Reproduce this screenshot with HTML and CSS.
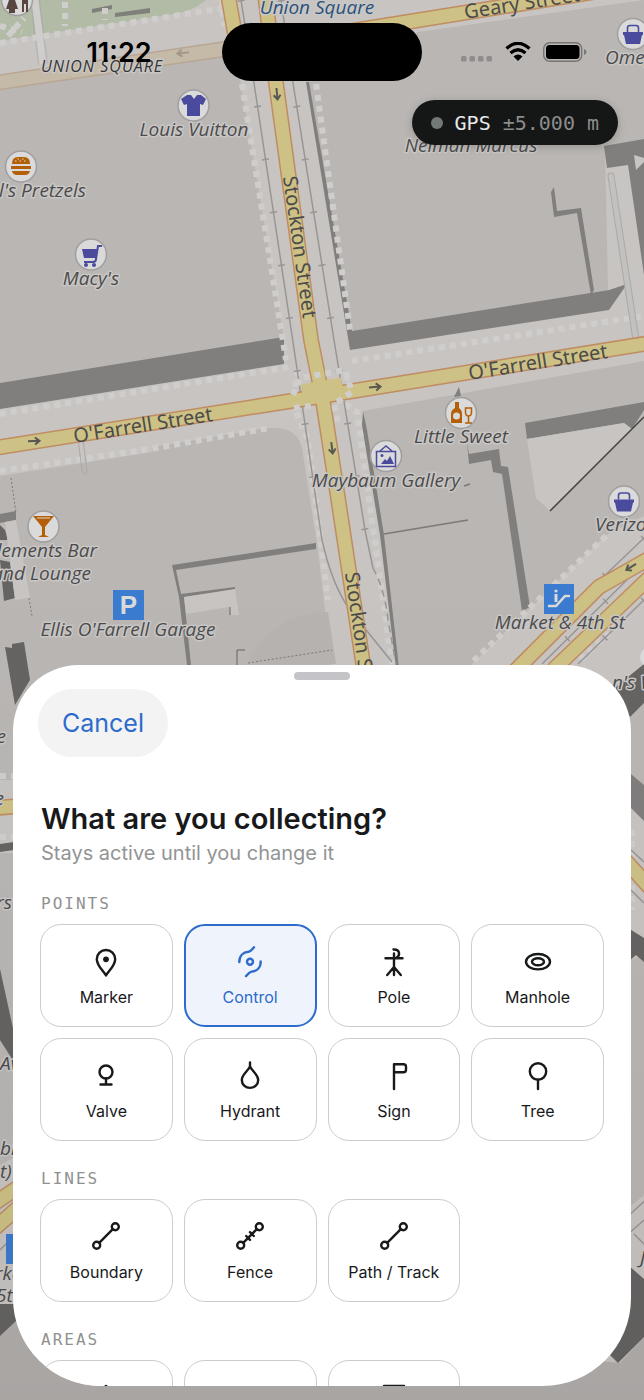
FILE: index.html
```html
<!DOCTYPE html>
<html lang="en">

<head>
  <meta charset="UTF-8">
  <meta name="viewport" content="width=device-width, initial-scale=1">
  <title>What are you collecting?</title>
  <link rel="stylesheet" href="styles.css">
</head>

<body>
  <div class="screen">

    <!-- map -->
    <svg class="map" viewBox="0 0 644 1400" preserveAspectRatio="xMidYMin slice" aria-hidden="true">
      <defs>
        <linearGradient id="fade" x1="0" y1="0" x2="0" y2="1">
          <stop offset="0" stop-color="#000" stop-opacity="0" />
          <stop offset="1" stop-color="#000" stop-opacity=".05" />
        </linearGradient>
        <g id="pin">
          <circle r="15.5" fill="#dadada" stroke="#a09e9e" stroke-width="1.5" />
        </g>
        <g id="bag">
          <path d="M-10 -2h20v3h-1l-2 9h-14l-2-9h-1z" fill="#4b4b9d" />
          <path d="M-5.500 -2v-4q0-2.500 2.500-2.500h6q2.500 0 2.500 2.500v4" fill="none" stroke="#4b4b9d" stroke-width="1.600" />
        </g>
        <path id="arrow" d="M-6 0h11M1-3.500L5.500 0 1 3.500" fill="none" stroke-width="2" />
      </defs>
      <rect width="644" height="1400" fill="#c8c4c2" />

      <!-- park -->
      <path d="M0 0h206q-15 13-38 15L0 41z" fill="#b1bba5" />
      <path d="M92 9l20-4v4l-20 4zM115 13l35-5v5l-35 4z" fill="#7f807b" />
      <path d="M35 0L43 64" stroke="#a5a3a3" stroke-width="10" fill="none" opacity=".5" />
      <path d="M35 0L43 64" stroke="#d0cecd" stroke-width="7" fill="none" />
      <path d="M65 2v24M105 8v12M0 26l22 6M8 36L24 18" class="dots" />
      <path d="M0 43L225 8" class="dots" />

      <!-- buildings -->
      <g fill="#bab6b3">
        <path d="M0 86L222 52L240 80L284 338L0 383z" />
        <path d="M306 48L644 0V140L605 147L608 290L352 331L307 80z" />
        <path d="M0 476L152 452V447L268 428Q297 426 302 448L318 550L332 670V780H0z" />
        <path d="M363 411L644 361V516L606 535L466 670H399z" />
        <path d="M0 853h40v290L0 1165zM600 720L631 716L644 703V785L631 774zM620 955l11 5 13-5V1195L620 1215z" />
        <path d="M0 1335L20 1306L620 1363L644 1337V1400H0z" fill="#b2aeac" />
      </g>
      <path d="M644 365L606 535L644 512z" fill="#bab6b3" />
      <path d="M247 664Q270 613 328 612L336 664z" fill="#b6b3b1" />

      <!-- shadows -->
      <g fill="#807f7d">
        <path d="M0 383L284 337V364L0 409z" />
        <path d="M306 82L309 82L352 331L609 290L627 284L609 310L350 350z" />
        <path d="M604 146L644 139V158L634 155L636 170L644 162V275L628 165L607 168z" />
        <path d="M551 192L554 187L557 211L581 208L594 290L591 295L577 213L554 217z" />
        <path d="M525 423L644 402V410L632 429L624 423L527 439z" />
        <path d="M467 443l2 11 30-5 2 17 7 1 22 140-8 4-20-137-9-2-2-12-22 4z" />
        <path d="M363 411L367 430L384 535L399 668H396L380 535L362 425z" />
        <path d="M172 565L316 543V549L176 570L181 594L235 587V590L184 597L191 665H187L179 597z" />
        <path d="M454 397L459 387L461 396z" />
        <path d="M0 514L16 511V520L0 523z" />
        <path d="M631 774L644 785V821L631 808z" />
      </g>
      <g fill="#656463">
        <path d="M0 525L5 530L8 540H0zM0 560L10 562L15 598L4 601z" />
        <path d="M5 647L12 648V644L24 642L30 680L15 705z" />
        <path d="M0 969L14 1033V1062L0 1040z" />
        <path d="M0 844L14 842V850L0 852z" />
        <path d="M0 1304H20L16 1321L0 1336z" />
        <path d="M644 664V703L630 717L612 690z" />
        <path d="M628 928L644 938V962L636 955L628 962z" />
        <path d="M628 1265L644 1279V1337L618 1363L605 1350z" />
      </g>
      <path d="M5 522L16 520L30 598L15 600z" fill="#c8c4c2" />
      <path d="M184 597L235 589L239 615H231L229 607L186 614z" fill="#c8c4c2" />
      <path d="M230 607v8M237 665V650h8" stroke="#656463" fill="none" />
      <path d="M527 439L624 423L632 429L550 511L536 498z" fill="#c8c4c2" />
      <path d="M644 417L550 511" stroke="#454443" stroke-width="1.500" />
      <path d="M384 534L468 520M464 486l6-2" stroke="#7b7977" stroke-width="1.500" />
      <path d="M248 663L332 650M11 478l5 35M29 598l3 18" stroke="#7b7977" stroke-dasharray="2 2" />

      <!-- footways -->
      <g class="dots">
        <path d="M242 84L286 360M316 84L350 330" />
        <path d="M0 414L290 367M352 361L644 316" />
        <path d="M0 471L150 449L270 428" />
        <path d="M298 370L292 402L308 440L328 600M348 375L340 400L357 412L392 664" />
        <path d="M606 536L470 664M625 618L580 660" />
        <path d="M222 0L224 26M632 830v80M0 776h14M0 837h14" />
      </g>
      <g fill="none">
        <path d="M78 439L82 470Q84 478 87 472L83 438" stroke="#aaa8a7" />
        <path d="M611 176L636 340" stroke="#a9a9a8" stroke-width="7" stroke-linecap="round" />
        <path d="M611 176L636 340" stroke="#c2c1c0" stroke-width="5" stroke-linecap="round" />
      </g>

      <!-- rails -->
      <g class="rail">
        <path d="M241 0L254 83L296 362L316 500L322 540Q332 585 350 610L392 662" />
        <path d="M281 0L293 83L334 340L365 530L373 568" />
        <path d="M373 568Q385 590 388 620L396 664" stroke-dasharray="7 5" />
        <path d="M644 538L598 582M644 563L542 664M644 600L578 664M631 850L644 862M631 890L644 903" />
        <path d="M0 1196L14 1184M0 1217L14 1207M0 1250L14 1236M626 1218L650 1196M626 1236L644 1220M634 1234L650 1250" />
      </g>
      <g class="ticks">
        <path d="M241 0L254 83L296 362L316 500" />
        <path d="M281 0L293 83L334 340L365 530" />
        <path d="M644 538L598 582M644 563L542 664M644 600L578 664" />
      </g>

      <!-- roads -->
      <path d="M-5 83L225 49" stroke="#b9a694" stroke-width="16" />
      <path d="M-5 83L225 49" stroke="#c4baa7" stroke-width="13" />
      <g class="casing">
        <path d="M228 -5L236 40M265 -5L276 83L311 340L322 395L338 498L364 670" />
        <path d="M320 36L600 -9" />
        <path d="M-5 448L322 396L650 343" />
        <path d="M650 558L599 587L515 671M650 577L553 670" />
        <path d="M-5 808L20 806M625 860L650 888M-5 1203L20 1186M-5 1228L20 1206" />
      </g>
      <g class="road">
        <path d="M228 -5L236 40M265 -5L276 83L311 340L322 395L338 498L364 670" />
        <path d="M320 36L600 -9" />
        <path d="M-5 448L322 396L650 343" />
        <path d="M650 558L599 587L515 671M650 577L553 670" />
        <path d="M-5 808L20 806M625 860L650 888M-5 1203L20 1186M-5 1228L20 1206" />
      </g>
      <path d="M293 395L300 378L345 370L352 392L334 404L338 422M294 408L312 406" class="dots" />
      <path d="M302 391L342 384" class="road" />
      <g stroke="#595752">
        <use href="#arrow" transform="translate(277 94) rotate(85)" />
        <use href="#arrow" transform="translate(332 448) rotate(83)" />
        <use href="#arrow" transform="translate(34 441) rotate(-3)" />
        <use href="#arrow" transform="translate(375 387) rotate(-5)" />
        <use href="#arrow" transform="translate(631 567) rotate(148)" />
      </g>
      <use href="#arrow" transform="translate(183 53) rotate(174)" stroke="#a1988a" />

      <!-- points of interest -->
      <use href="#pin" x="17" y="0" />
      <path d="M9 0h6l3 9h-3v4H9V9H6zM22 0h6v12h-2V4h-2v8h-2z" fill="#594540" />
      <use href="#pin" x="193.500" y="105.500" />
      <path d="M187 95l4 0 3 4 3-4 4 0 5 4-3 6-3-1v12h-13v-12l-3 1-3-6z" fill="#4b4b9d" />
      <use href="#pin" x="21" y="166.500" />
      <path d="M12 164q0-7 6-7h6q6 0 6 7zM11 166h20v3H11zM12 171h18q-1 4-5 4h-8q-4 0-5-4z" fill="#b45f06" />
      <path d="M15 161h1.500m3 0h1.500m3 0h1.500m-8-2h1.500m3 0h1.500" stroke="#dadada" />
      <use href="#pin" x="91" y="254.500" />
      <path d="M82 249h15l-1 9H84z" fill="#4b4b9d" />
      <path d="M102 246h-4l-2 13q0 3-3 3h-9" fill="none" stroke="#4b4b9d" stroke-width="2" />
      <circle cx="86" cy="265" r="2" fill="#4b4b9d" />
      <circle cx="94" cy="265" r="2" fill="#4b4b9d" />
      <use href="#pin" x="633" y="34" />
      <use href="#bag" x="633" y="34" />
      <use href="#pin" x="624" y="501.500" />
      <use href="#bag" x="624" y="501.500" />
      <use href="#pin" x="461" y="413" />
      <path d="M455 402h4v6q3 2 3 6v9h-11v-9q0-4 4-6z" fill="#b45f06" />
      <circle cx="456.500" cy="416" r="3.500" fill="#dadada" />
      <path d="M465.500 408h6v4q0 4-3 4t-3-4zM468.500 416v7M465 423h7" fill="none" stroke="#b45f06" stroke-width="1.500" />
      <use href="#pin" x="386" y="456" />
      <path d="M376.500 451.500h19v15h-19zM380 451l6-5 6 5" fill="none" stroke="#4b4b9d" stroke-width="1.500" />
      <path d="M381 464l4-5 2 2 3-5 4 8z" fill="#4b4b9d" />
      <circle cx="382" cy="455.500" r="1.500" fill="#4b4b9d" />
      <use href="#pin" x="43.500" y="526.500" />
      <path d="M33 516h21l-9 11v8l4 2H38l4-2v-8z" fill="#b45f06" />
      <path d="M37 518h13" stroke="#dadada" />
      <path d="M113 590h31v30H113zM544 584h30v30H544zM6 1234h31v30H6z" fill="#3b7bd0" />
      <text class="parking" x="128.500" y="614">P</text>
      <path d="M549 606h7l9-10h4" fill="none" stroke="#dadada" stroke-width="2.500" stroke-linecap="round" />
      <path d="M556 594v8" stroke="#dadada" stroke-width="3" />
      <circle cx="556" cy="591" r="1.600" fill="#dadada" />
      <circle cx="650" cy="657" r="10" fill="#dadada" />

      <!-- labels -->
      <g class="place">
        <text x="194" y="136">Louis Vuitton</text>
        <text x="86" y="197" class="end">Wetzel's Pretzels</text>
        <text x="91" y="285">Macy's</text>
        <text x="471" y="152">Neiman Marcus</text>
        <text x="605" y="64" class="start">Omega</text>
        <text x="461" y="443">Little Sweet</text>
        <text x="386" y="487">Maybaum Gallery</text>
        <text x="595" y="531" class="start">Verizon</text>
        <text x="97" y="557" class="end">Clements Bar</text>
        <text x="91" y="580" class="end">and Lounge</text>
        <text x="128" y="636">Ellis O'Farrell Garage</text>
        <text x="560" y="629">Market &amp; 4th St</text>
        <text x="612" y="689" class="start">n's W</text>
        <text x="6" y="743" class="end">e</text>
        <text x="4" y="805" class="end">e</text>
        <text x="12" y="909" class="end">rs</text>
        <text x="0" y="1070" class="start">Av</text>
        <text x="0" y="1155" class="start">bl</text>
        <text x="0" y="1178" class="start">t)</text>
        <text x="-5" y="1280" class="start">rke</text>
        <text x="-4" y="1302" class="start">5th</text>
        <text x="640" y="1264" class="start">J</text>
        <text x="317" y="14" class="station">Union Square</text>
        <text x="102" y="72" class="district">UNION SQUARE</text>
      </g>
      <g class="street">
        <text transform="translate(299 247) rotate(82)" y="6">Stockton Street</text>
        <text transform="translate(361 643) rotate(82)" y="6">Stockton Street</text>
        <text transform="translate(143 426) rotate(-9)" y="6">O'Farrell Street</text>
        <text transform="translate(538 363) rotate(-9)" y="6">O'Farrell Street</text>
        <text transform="translate(522 4) rotate(-9)" y="6">Geary Street</text>
      </g>
      <rect y="560" width="644" height="840" fill="url(#fade)" />
    </svg>

    <header class="status">
      <time class="clock">11:22</time>
      <div class="island"></div>
      <div class="indicators">
        <svg width="32" height="20" viewBox="0 0 32 20" fill="#8f8c8b">
          <rect x="0" y="14" width="5.500" height="5.500" rx="1.500" />
          <rect x="8.500" y="14" width="5.500" height="5.500" rx="1.500" />
          <rect x="17" y="14" width="5.500" height="5.500" rx="1.500" />
          <rect x="25.500" y="14" width="5.500" height="5.500" rx="1.500" />
        </svg>
        <svg width="26" height="20" viewBox="0 0 26 20">
          <path d="M1.500 6.500Q13-4 24.500 6.500M5.500 11q7.500-6.500 15 0" fill="none" stroke="#000" stroke-width="3.200" />
          <path d="M8.500 14.500q4.500-4 9 0L13 19z" />
        </svg>
        <svg width="44" height="20" viewBox="0 0 44 20">
          <rect x=".7" y=".7" width="38" height="18.600" rx="6" fill="none" stroke="#777473" stroke-width="1.400" />
          <rect x="3" y="3" width="33.500" height="14" rx="3.500" />
          <path d="M41 7q2.500 1 2.500 3T41 13z" fill="#777473" />
        </svg>
      </div>
    </header>

    <div class="gps">
      <span class="gps-dot"></span>
      <span class="gps-name">GPS</span>
      <span class="gps-value">±5.000 m</span>
    </div>

    <main class="sheet">
      <div class="handle"></div>
      <button type="button" class="cancel">Cancel</button>

      <h1>What are you collecting?</h1>
      <p class="hint">Stays active until you change it</p>

      <section>
        <h2>POINTS</h2>
        <div class="grid">
          <button type="button" class="card">
            <svg class="icon" viewBox="0 0 32 32">
              <path d="M16 29.500C13 24.500 6.800 19.500 6.800 13.200a9.200 9.200 0 0 1 18.400 0C25.200 19.500 19 24.500 16 29.500z" />
              <circle cx="16" cy="13.300" r="2.900" class="solid" />
            </svg>
            <span>Marker</span>
          </button>
          <button type="button" class="card selected" aria-pressed="true">
            <svg class="icon" viewBox="0 0 32 32">
              <circle cx="16" cy="15.700" r="3" />
              <path id="swirl" d="M5.300 16C5.300 10 9 6.200 14.500 5.800C17 5.500 18 3 20 1.300" />
              <use href="#swirl" transform="rotate(180 16 15.700)" />
            </svg>
            <span>Control</span>
          </button>
          <button type="button" class="card">
            <svg class="icon" viewBox="0 0 32 32">
              <path d="M16 7.500V29M7.500 12.300h17M16 21l-6.800 8M16 21l6.800 8M15.500 3.500C22 3 22.500 9.500 18.500 11.500" />
            </svg>
            <span>Pole</span>
          </button>
          <button type="button" class="card">
            <svg class="icon" viewBox="0 0 32 32">
              <ellipse cx="16" cy="15.700" rx="12" ry="7.700" />
              <ellipse cx="16" cy="15.700" rx="6" ry="3.500" />
            </svg>
            <span>Manhole</span>
          </button>
          <button type="button" class="card">
            <svg class="icon" viewBox="0 0 32 32">
              <circle cx="16" cy="12" r="6.500" />
              <path d="M16 18.500v6M10.500 24.500h11" />
            </svg>
            <span>Valve</span>
          </button>
          <button type="button" class="card">
            <svg class="icon" viewBox="0 0 32 32">
              <path d="M16 2.500v4C14 11 7.800 14.500 7.800 20a8.200 7.900 0 0 0 16.400 0C24.200 14.500 18 11 16 6.500" />
            </svg>
            <span>Hydrant</span>
          </button>
          <button type="button" class="card">
            <svg class="icon" viewBox="0 0 32 32">
              <path d="M16 29V4.300h9.500q2.500 0 2.500 2.500v3q0 2.400-2.500 2.400H16" />
            </svg>
            <span>Sign</span>
          </button>
          <button type="button" class="card">
            <svg class="icon" viewBox="0 0 32 32">
              <circle cx="16" cy="11.500" r="8.200" />
              <path d="M16 19.700V29" />
            </svg>
            <span>Tree</span>
          </button>
        </div>
      </section>

      <section>
        <h2>LINES</h2>
        <div class="grid">
          <button type="button" class="card">
            <svg class="icon" viewBox="0 0 32 32">
              <circle cx="6.700" cy="24.300" r="3.500" />
              <circle cx="25.300" cy="5.700" r="3.500" />
              <path d="M9.200 21.800L22.800 8.200" />
            </svg>
            <span>Boundary</span>
          </button>
          <button type="button" class="card">
            <svg class="icon" viewBox="0 0 32 32">
              <circle cx="6.700" cy="24.300" r="3.500" />
              <circle cx="25.300" cy="5.700" r="3.500" />
              <path d="M9.200 21.800L22.800 8.200M12.200 15l3.800 3.800M16 11.200l3.800 3.800" />
            </svg>
            <span>Fence</span>
          </button>
          <button type="button" class="card">
            <svg class="icon" viewBox="0 0 32 32">
              <circle cx="6.700" cy="24.300" r="3.500" />
              <circle cx="25.300" cy="5.700" r="3.500" />
              <path d="M9.200 21.800L22.800 8.200" />
            </svg>
            <span>Path / Track</span>
          </button>
        </div>
      </section>

      <section>
        <h2>AREAS</h2>
        <div class="grid">
          <button type="button" class="card">
            <svg class="icon" viewBox="0 0 32 32">
              <path d="M16 4l11 9-4 14H9L5 13z" />
            </svg>
          </button>
          <button type="button" class="card">
            <svg class="icon" viewBox="0 0 32 32">
              <path d="M5 8h22v18H5z" />
            </svg>
          </button>
          <button type="button" class="card">
            <svg class="icon" viewBox="0 0 32 32">
              <path d="M6 4h20v24H6z" />
            </svg>
          </button>
        </div>
      </section>
    </main>
  </div>
</body>

</html>
```

FILE: styles.css
```css
* {
  box-sizing: border-box;
}

body {
  margin: 0;
  font-family: Inter, "Liberation Sans", sans-serif;
  color: #18191b;
}

h1,
h2,
p {
  margin: 0;
}

button {
  font: inherit;
  color: inherit;
  cursor: pointer;
}

.screen {
  position: relative;
  display: flex;
  flex-direction: column;
  height: 100vh;
  overflow: hidden;
}

/* map */
.map {
  position: absolute;
  top: 0;
  left: 0;
  width: 100%;
  height: 100%;
}

.dots {
  fill: none;
  stroke: #d0cecc;
  stroke-width: 6;
  stroke-dasharray: 6 5;
}

.rail {
  fill: none;
  stroke: #989695;
  stroke-width: 1.5;
}

.ticks {
  fill: none;
  stroke: #989695;
  stroke-width: 7;
  stroke-dasharray: 1.5 52;
}

.casing {
  fill: none;
  stroke: #c08c62;
  stroke-width: 16;
}

.road {
  fill: none;
  stroke: #cdc185;
  stroke-width: 13;
}

.place,
.street {
  font-family: "Noto Sans", "Open Sans", sans-serif;
  font-size: 20px;
  fill: #4c4b4b;
  stroke: #c9c7c6;
  stroke-width: 3px;
  stroke-linejoin: round;
  paint-order: stroke;
  text-anchor: middle;
}

.place {
  font-family: "Open Sans", "Noto Sans", sans-serif;
  font-size: 19px;
  font-style: italic;
}

.street {
  stroke: none;
}

.place .end {
  text-anchor: end;
}

.place .start {
  text-anchor: start;
}

.place .station {
  fill: #2b517b;
}

.place .district {
  font-size: 16px;
  letter-spacing: 1px;
  fill: #363535;
}

.parking {
  font: bold 26px "Liberation Sans", sans-serif;
  fill: #dadada;
  text-anchor: middle;
}

/* status bar */
.status {
  position: relative;
  display: grid;
  grid-template-columns: 1fr 200px 1fr;
  align-items: center;
  padding-top: 23px;
}

.clock {
  padding-left: 16px;
  font-size: 27px;
  font-weight: 600;
  text-align: center;
  color: #000;
}

.island {
  height: 58px;
  border-radius: 29px;
  background: #000;
}

.indicators {
  display: flex;
  justify-content: flex-end;
  gap: 12px;
  padding-right: 57px;
}

.gps {
  position: relative;
  display: flex;
  align-items: center;
  align-self: flex-end;
  gap: 12px;
  height: 45px;
  margin: 19px 26px 0 0;
  padding: 0 19px;
  border-radius: 23px;
  background: #151616;
  box-shadow: 0 2px 10px rgba(0, 0, 0, .2);
  font-family: "DejaVu Sans Mono", "Liberation Mono", monospace;
  font-size: 20px;
}

.gps-dot {
  width: 12px;
  height: 12px;
  border-radius: 50%;
  background: #737977;
}

.gps-name {
  color: #e8e8e8;
}

.gps-value {
  color: #8b8c8c;
}

/* bottom sheet */
.sheet {
  position: relative;
  height: 51.5vh;
  margin: auto 13px 14px;
  padding: 7px 27px 0;
  border-radius: 66px 66px 88px 88px;
  background: #fff;
  overflow: hidden;
}

.handle {
  width: 56px;
  height: 8px;
  margin: 0 auto 9px;
  border-radius: 4px;
  background: #c4c4c8;
}

.cancel {
  display: block;
  height: 68px;
  margin: 0 0 42px -2px;
  padding: 0 24px;
  border: 0;
  border-radius: 34px;
  background: #f3f3f3;
  color: #2d6bcc;
  font-size: 25px;
}

h1,
.hint,
h2 {
  margin-left: 1px;
}

h1 {
  font-size: 29px;
  font-weight: 600;
  line-height: 40px;
}

.hint {
  font-size: 20px;
  line-height: 28px;
  color: #929494;
}

section {
  margin-top: 27px;
}

h2 {
  margin-bottom: 10px;
  font-family: "DejaVu Sans Mono", "Liberation Mono", monospace;
  font-size: 16px;
  font-weight: 400;
  line-height: 21px;
  letter-spacing: 2px;
  color: #8f9191;
}

.hint + section {
  margin-top: 26px;
}

.grid {
  display: grid;
  grid-template-columns: repeat(4, 1fr);
  gap: 11px;
}

.card {
  display: flex;
  flex-direction: column;
  align-items: center;
  gap: 9px;
  height: 103px;
  padding: 21px 0 0;
  border: 1px solid #cbcccc;
  border-radius: 21px;
  background: #fff;
  font-size: 16px;
  line-height: 20px;
}

.card.selected {
  padding-top: 20px;
  border: 2px solid #2d6bcc;
  background: #eff4fc;
  color: #2d6bcc;
}

.icon {
  flex: none;
  width: 32px;
  height: 32px;
  fill: none;
  stroke: currentColor;
  stroke-width: 2.4;
  stroke-linecap: round;
  stroke-linejoin: round;
}

.icon .solid {
  fill: currentColor;
  stroke: none;
}
```
